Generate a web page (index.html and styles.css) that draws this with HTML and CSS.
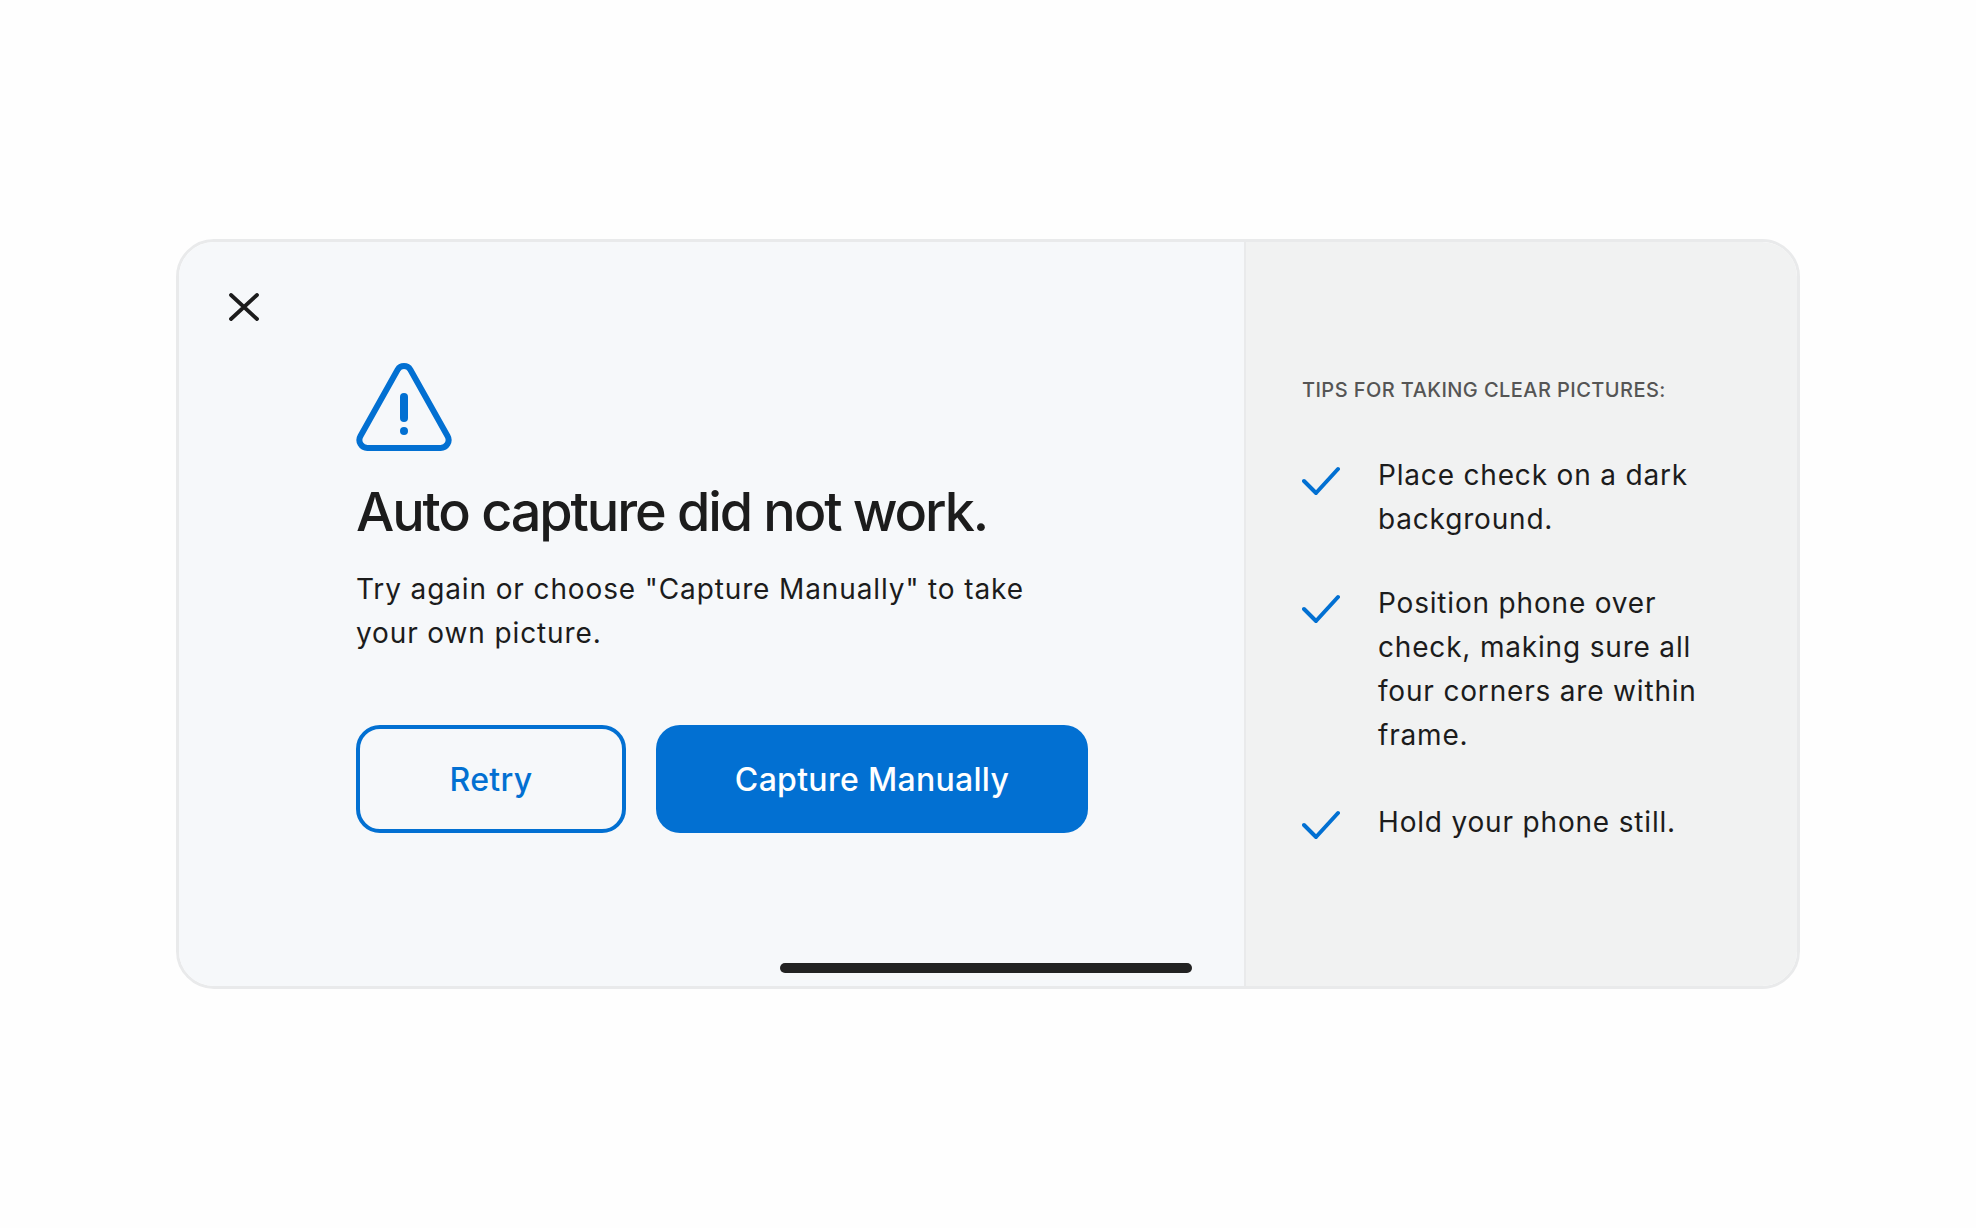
FILE: index.html
```html
<!DOCTYPE html>
<html lang="en">
<head>
    <meta charset="UTF-8">
    <title>Auto capture did not work</title>
    <link rel="stylesheet" href="styles.css">
</head>
<body>
    <div class="card">
        <div class="main">
            <button class="close" aria-label="Close">
                <svg width="30" height="28" viewBox="0 0 30 28"><path d="M2 2 L28 26 M28 2 L2 26" fill="none" stroke="#1c1c1c" stroke-width="3.8" stroke-linecap="round"/></svg>
            </button>

            <div class="message">
                <svg class="warn" width="96" height="88" viewBox="0 0 96 88">
                    <path d="M41.600 6.700 A7.500 7.500 0 0 1 54.400 6.700 L91.500 73 A8 8 0 0 1 84.500 85 L11.500 85 A8 8 0 0 1 4.500 73 Z" fill="none" stroke="#0270d2" stroke-width="6"/>
                    <path d="M48 34 L48 55" fill="none" stroke="#0270d2" stroke-width="8" stroke-linecap="round"/>
                    <circle cx="48" cy="68" r="4" fill="#0270d2"/>
                </svg>
                <h1>Auto capture did not work.</h1>
                <p>Try again or choose "Capture Manually" to take your own picture.</p>
                <div class="actions">
                    <button class="btn btn-outline">Retry</button>
                    <button class="btn btn-primary">Capture Manually</button>
                </div>
            </div>

            <div class="home-bar"></div>
        </div>

        <div class="tips">
            <h2>TIPS FOR TAKING CLEAR PICTURES:</h2>
            <ul>
                <li>
                    <svg class="check" width="38" height="30" viewBox="0 0 38 30"><path d="M2 15 L14 27 L36 3" fill="none" stroke="#0270d2" stroke-width="4" stroke-linecap="round" stroke-linejoin="round"/></svg>
                    <span>Place check on a dark background.</span>
                </li>
                <li>
                    <svg class="check" width="38" height="30" viewBox="0 0 38 30"><path d="M2 15 L14 27 L36 3" fill="none" stroke="#0270d2" stroke-width="4" stroke-linecap="round" stroke-linejoin="round"/></svg>
                    <span>Position phone over check, making sure all four corners are within frame.</span>
                </li>
                <li>
                    <svg class="check" width="38" height="30" viewBox="0 0 38 30"><path d="M2 15 L14 27 L36 3" fill="none" stroke="#0270d2" stroke-width="4" stroke-linecap="round" stroke-linejoin="round"/></svg>
                    <span>Hold your phone still.</span>
                </li>
            </ul>
        </div>
    </div>
</body>
</html>
```

FILE: styles.css
```css
body {
    margin: 0;
    padding: 239px 176px;
    background-color: #fefefe;
    font-family: Inter, "Noto Sans", sans-serif;
    color: #1c1c1c;
}

.card {
    display: flex;
    box-sizing: border-box;
    width: 1624px;
    height: 750px;
    border: 3px solid #e9eaeb;
    border-radius: 38px;
    overflow: hidden;
}

.main {
    position: relative;
    flex: 1;
    background: #f6f8fa;
    padding: 51px 0 0 50px;
}

.close {
    display: block;
    padding: 0;
    border: none;
    background: none;
    height: 28px;
}

.message {
    margin-left: 127px;
    margin-top: 42px;
}

.warn {
    display: block;
}

h1 {
    margin: 29px 0 0;
    font-size: 54px;
    line-height: 64px;
    font-weight: 500;
    letter-spacing: -2.1px;
}

.message p {
    width: 690px;
    margin: 23px 0 0;
    font-size: 28px;
    line-height: 44px;
    letter-spacing: 0.88px;
}

.actions {
    display: flex;
    gap: 30px;
    margin-top: 70px;
}

.btn {
    height: 108px;
    border-radius: 24px;
    font-family: inherit;
    font-size: 32px;
    font-weight: 500;
    letter-spacing: 0.3px;
}

.btn-outline {
    width: 270px;
    border: 4px solid #0270d2;
    background: transparent;
    color: #0270d2;
}

.btn-primary {
    width: 432px;
    border: none;
    background: #0270d2;
    color: #fff;
}

.home-bar {
    position: absolute;
    left: 601px;
    bottom: 13px;
    width: 412px;
    height: 10px;
    border-radius: 5px;
    background: #222;
}

.tips {
    box-sizing: border-box;
    width: 553px;
    background: #f1f2f2;
    border-left: 2px solid #e9eaeb;
    padding: 134px 70px 0 56px;
}

h2 {
    margin: 0;
    font-size: 20px;
    line-height: 28px;
    font-weight: 500;
    letter-spacing: 0.43px;
    color: #555;
}

ul {
    list-style: none;
    margin: 49px 0 0;
    padding: 0;
}

li {
    display: flex;
    gap: 38px;
    margin-bottom: 40px;
    font-size: 28px;
    line-height: 44px;
    letter-spacing: 0.82px;
}

li:last-child {
    margin-top: 43px;
}

.check {
    flex: none;
    margin-top: 13px;
}

li:last-child .check {
    margin-top: 10px;
}
```
